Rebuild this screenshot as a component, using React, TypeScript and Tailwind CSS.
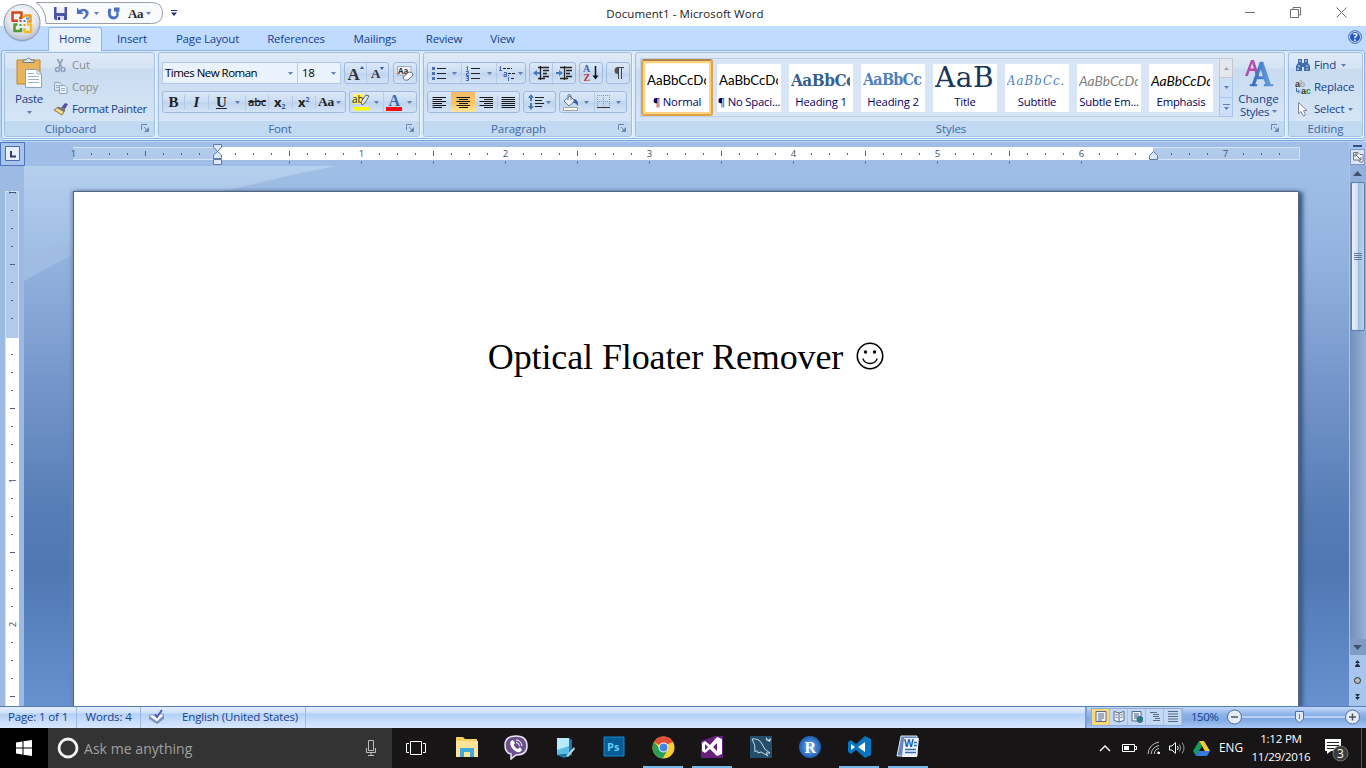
import type { ReactNode } from "react";

type IconProps = { w: number; h: number; className?: string; children: ReactNode };

function Icon({ w, h, className = "", children }: IconProps) {
  return (
    <svg width={w} height={h} viewBox={`0 0 ${w} ${h}`} className={`shrink-0 ${className}`} fill="none">
      {children}
    </svg>
  );
}

function Caret({ className = "" }: { className?: string }) {
  return (
    <Icon w={5} h={3} className={className}>
      <path d="M0 0H5L2.5 3Z" fill="#5d7fb5" />
    </Icon>
  );
}

function Launcher() {
  return (
    <Icon w={8} h={8}>
      <path d="M0.5 6V0.5H6" stroke="#6c86ae" />
      <path d="M3 3L6 6M7.5 3.5V7.5H3.5" stroke="#6c86ae" />
      <path d="M7 4V7H4Z" fill="#6c86ae" />
    </Icon>
  );
}

function OfficeButton() {
  return (
    <svg width="42" height="42" viewBox="0 0 42 42" className="absolute left-[1px] top-[2px] z-20" fill="none">
      <defs>
        <radialGradient id="orb" cx="0.5" cy="0.35" r="0.65">
          <stop offset="0" stopColor="#ffffff" />
          <stop offset="0.6" stopColor="#e6e8ec" />
          <stop offset="1" stopColor="#b4bfd0" />
        </radialGradient>
      </defs>
      <circle cx="21" cy="21.5" r="18.5" fill="#9fb4d3" opacity="0.6" />
      <circle cx="21" cy="20.5" r="18" fill="url(#orb)" stroke="#8d9db8" />
      <path d="M17 18.800H11.500V10.500H20.500V16H18" stroke="#d5451b" strokeWidth="2.500" strokeLinejoin="round" />
      <path d="M23.500 13.500H29.500V19.500H26M22.500 16V13.500" stroke="#f09a1c" strokeWidth="2.400" strokeLinejoin="round" />
      <path d="M16.500 22.500H13.500V29H20V26" stroke="#4d9a2f" strokeWidth="2.500" strokeLinejoin="round" />
      <path d="M26 22.500H30V30H23.500V26" stroke="#f6bd21" strokeWidth="2.500" strokeLinejoin="round" />
      <path d="M18.500 18h2v2h-2z" fill="#c8401b" />
      <path d="M22.500 18h2v2h-2z" fill="#3977c9" />
      <path d="M18.500 22h2v2h-2z" fill="#4d9a2f" />
      <path d="M22.500 22h2v2h-2z" fill="#e39d1c" />
      <path d="M25 15.500h3v2h-3z" fill="#4f93d8" />
    </svg>
  );
}

function TitleBar() {
  return (
    <header className="relative flex h-[26px] shrink-0 bg-white">
      <svg width="180" height="26" viewBox="0 0 180 26" className="absolute left-0 top-0" fill="none">
        <path d="M36 2.500H151.500Q162.500 2.500 162.500 13Q162.500 23.500 151.500 23.500H46Q46 9 36 2.500Z" fill="#f8fafc" stroke="#9a9da3" />
      </svg>
      <div className="relative flex h-[26px] w-[200px] items-center pl-[53px]">
        <Icon w={15} h={15}>
          <path d="M1 1H14V14H2.500L1 12.500Z" fill="#4a55a8" />
          <path d="M3.500 1H11.500V7H3.500Z" fill="#eef1fb" />
          <path d="M4 10H11V14H4Z" fill="#d3daf0" />
          <path d="M5 11H7V14H5Z" fill="#30397f" />
        </Icon>
        <Icon w={13} h={13} className="ml-[8px]">
          <path d="M1 0.500V7H7.500L5.500 5Q8.500 3.500 9.500 5.500Q10.500 8 7 11L8 12.500Q13.500 9 12.500 4.500Q9.500 0 3.500 3Z" fill="#4a71c5" />
        </Icon>
        <Caret className="ml-[5px]" />
        <Icon w={13} h={13} className="ml-[8px]">
          <path d="M7 0.500H12.500V5L11 4.500Q13 9 9.500 11.500Q5.500 14 2 10.500Q0 7 1.500 1.500L4.500 2Q3 7 4.500 8.500Q7 10.500 9 8.500Q10 6.500 8.500 4L7 5Z" fill="#4a71c5" />
        </Icon>
        <span className="ml-[8px] w-[16px] font-['Liberation_Serif',serif] text-[13px] font-bold leading-none tracking-[-0.300px] text-[#2c2c2c]">Aa</span>
        <Caret className="ml-[2px]" />
        <Icon w={6} h={6} className="ml-[20px]">
          <path d="M0 0.500H6" stroke="#17366e" />
          <path d="M0 2.500H6L3 6Z" fill="#17366e" />
        </Icon>
      </div>
      <div className="flex flex-1 justify-center pr-[196px] pt-[7px] text-[11.500px] leading-[14px] tracking-[0.080px] text-[#1b1b1b]">
        <span className="whitespace-nowrap">Document1 - Microsoft Word</span>
      </div>
      <div className="absolute right-[19px] top-[7px] flex items-center gap-[35px]">
        <Icon w={10} h={11}><path d="M0 5.500H10" stroke="#707070" /></Icon>
        <Icon w={11} h={11}><path d="M3 2.500V0.500H10.500V8H8.500M0.500 2.500H8.500V10.500H0.500Z" stroke="#707070" /></Icon>
        <Icon w={11} h={11}><path d="M0.500 0.500L10.500 10.500M10.500 0.500L0.500 10.500" stroke="#707070" /></Icon>
      </div>
    </header>
  );
}

function Tabs() {
  return (
    <nav className="relative z-10 flex h-[24px] shrink-0 bg-[#bfdbff] pl-[48px] text-[11.500px] leading-[14px] tracking-[-0.180px] text-[#15428b]">
      <div className="mt-[1px] h-[24px] w-[54px] rounded-t-[3px] border border-b-0 border-[#8fb5e6] bg-[#e9f1fc] pt-[4px] text-center">Home</div>
      <span className="w-[60px] pt-[6px] text-center">Insert</span>
      <span className="w-[91px] pt-[6px] text-center">Page Layout</span>
      <span className="w-[86px] pt-[6px] text-center">References</span>
      <span className="w-[72px] pt-[6px] text-center">Mailings</span>
      <span className="w-[66px] pt-[6px] text-center">Review</span>
      <span className="w-[51px] pt-[6px] text-center">View</span>
      <span className="ml-auto mr-[4px] mt-[4px] flex h-[14px] w-[14px] items-center justify-center rounded-full border border-[#6282bd] bg-[#2457c5] text-[10px] font-bold leading-none text-white ring-1 ring-inset ring-[#d7e6fc]">?</span>
    </nav>
  );
}

function Group({ label, width, launcher, children }: { label: string; width: string; launcher?: boolean; children: ReactNode }) {
  return (
    <section className={`flex h-[85px] shrink-0 flex-col overflow-hidden rounded-[3px] border border-[#a3bfe0] bg-[linear-gradient(180deg,#dfeaf7_0%,#d5e3f3_18%,#c9dbf0_20%,#d9e8f8_100%)] shadow-[1px_1px_0_#eef6ff] ${width}`}>
      <div className="h-[68px] shrink-0">{children}</div>
      <footer className="flex h-[15px] items-center bg-[#c1d9f1] text-[11.500px] leading-[14px] tracking-[-0.100px] text-[#4069a5]">
        <span className={`flex-1 text-center ${launcher ? "pr-[5px]" : ""}`}>{label}</span>
        {launcher && <span className="mb-[2px] mr-[5px]"><Launcher /></span>}
      </footer>
    </section>
  );
}

function Clipboard() {
  return (
    <Group label="Clipboard" width="w-[151px]" launcher>
      <div className="flex h-full text-[11.500px] leading-[14px]">
        <div className="flex w-[48px] flex-col items-center pt-[4px] text-[#15428b]">
          <Icon w={28} h={31}>
            <path d="M2 3H25V27H2Z" fill="#e7b45a" stroke="#bf8633" />
            <path d="M8 5.500V3H11Q13.500 -1 16 3H19V5.500Z" fill="#dfe4e9" stroke="#6d7a86" />
            <path d="M10.500 12.500H22L26.500 17V30.500H10.500Z" fill="white" stroke="#8aa0c4" />
            <path d="M22 12.500V17H26.500M13 16.500H19M13 19.500H24M13 22.500H24M13 25.500H24" stroke="#9caecb" />
          </Icon>
          <span className="mt-[4px] tracking-[-0.300px]">Paste</span>
          <Caret className="mt-[5px]" />
        </div>
        <div className="flex flex-col pt-[1px]">
          <span className="flex h-[22px] shrink-0 items-center tracking-[-0.200px] text-[#8d8d8d]">
            <Icon w={15} h={15} className="mr-[4px]"><path d="M4.500 1L8.500 9M9.500 1L6 9" stroke="#8fa0b9" strokeWidth="1.700" /><circle cx="4.500" cy="11.500" r="2" stroke="#8fa0b9" strokeWidth="1.500" /><circle cx="10" cy="11.500" r="2" stroke="#8fa0b9" strokeWidth="1.500" /></Icon>
            Cut
          </span>
          <span className="flex h-[22px] shrink-0 items-center tracking-[-0.200px] text-[#8d8d8d]">
            <Icon w={15} h={13} className="mr-[4px]"><path d="M1.500 1.500H7L9 3.500V9.500H1.500Z" fill="#dce4ef" stroke="#8fa4c3" /><path d="M6.500 4.500H12L14 6.500V12.500H6.500Z" fill="#edf2f8" stroke="#8fa4c3" /><path d="M8 7.500h4M8 9.500h4M3 4.500h3M3 6.500h3" stroke="#9aafca" /></Icon>
            Copy
          </span>
          <span className="flex h-[22px] shrink-0 items-center whitespace-nowrap tracking-[-0.380px] text-[#15428b]">
            <Icon w={16} h={14} className="mr-[3px]"><path d="M8 6L12 1L15 2L12 7Z" fill="#574fa4" /><path d="M5 5L12 8L9 13L1 8Z" fill="#f1dc8d" stroke="#8c7740" /><path d="M5 5L12 8L11 10L4 6Z" fill="#64727f" /></Icon>
            Format Painter
          </span>
        </div>
      </div>
    </Group>
  );
}

const box = "flex h-[22px] items-center rounded-[3px] border border-[#9ebae1] bg-[linear-gradient(180deg,#dbe8f8,#cbdcf2_48%,#bfd4ee_52%,#d2e3f7)]";
const divider = "border-r border-[#b3cbe9]";

function FontGroup() {
  return (
    <Group label="Font" width="w-[262px]" launcher>
      <div className="flex gap-[4px] pl-[3px] pt-[9px]">
        <div className="flex h-[22px] text-[11.500px] leading-[20px] text-black">
          <div className="flex w-[136px] items-center border border-[#b3c9e8] bg-[#eaf2fb] pl-[2px]"><span className="w-[123px] tracking-[-0.520px]">Times New Roman</span><Caret /></div>
          <div className="flex w-[43px] items-center border border-l-0 border-[#b3c9e8] bg-[#eaf2fb] pl-[4px]"><span className="w-[29px] tracking-[-0.400px]">18</span><Caret /></div>
        </div>
        <div className={`${box} -ml-px w-[45px] font-['Liberation_Serif',serif] font-bold text-[#333]`}>
          <span className={`flex h-full w-[23px] justify-center pt-[3px] text-[17px] leading-none ${divider}`}>A<Icon w={4} h={3}><path d="M2 0L4 3H0Z" fill="#345ba0" /></Icon></span>
          <span className="flex h-full w-[21px] justify-center pt-[1px] text-[13px] leading-[19px]">A<Icon w={4} h={3} className="mt-[3px]"><path d="M0 0H4L2 3Z" fill="#345ba0" /></Icon></span>
        </div>
        <div className={`${box} w-[24px] justify-center`}>
          <Icon w={17} h={17}><path d="M0.500 1.500H14V10H0.500Z" fill="#f3f5fa" stroke="#a0aac0" /><text x="1" y="9" fontSize="8" fontWeight="bold" fill="#333">Aa</text><path d="M6 12L12 7Q16 7 16 10L11 15Q6 16 6 12Z" fill="#fbfbfd" stroke="#69758e" /></Icon>
        </div>
      </div>
      <div className="flex gap-[3px] pl-[3px] pt-[7px]">
        <div className={`${box} w-[184px] font-['Liberation_Serif',serif] text-[15px] font-bold leading-none text-[#222]`}>
          <span className={`w-[22px] shrink-0 text-center ${divider}`}>B</span>
          <span className={`w-[24px] shrink-0 text-center italic ${divider}`}>I</span>
          <span className={`flex w-[37px] shrink-0 items-center gap-[8px] pl-[7px] ${divider}`}><span className="underline">U</span><Caret /></span>
          <span className={`w-[23px] shrink-0 text-center text-[11px] leading-[14px] line-through font-['Open_Sans',sans-serif] font-semibold tracking-[-0.300px] ${divider}`}>abc</span>
          <span className={`flex w-[24px] shrink-0 items-end pl-[5px] font-['Open_Sans',sans-serif] text-[13px] ${divider}`}>x<span className="text-[7px] leading-[5px] text-[#315ca8]">2</span></span>
          <span className={`flex w-[23px] shrink-0 items-start pl-[5px] font-['Open_Sans',sans-serif] text-[13px] ${divider}`}>x<span className="text-[7px] leading-[7px] text-[#315ca8]">2</span></span>
          <span className="flex shrink-0 items-center pl-[2px] text-[13.500px] tracking-[-0.300px]">Aa<Caret className="ml-[2px]" /></span>
        </div>
        <div className={`${box} w-[68px]`}>
          <span className={`flex h-full w-[34px] items-center pl-[2px] ${divider}`}>
            <Icon w={18} h={18}><path d="M1 1H11V11H1Z" fill="#fff65c" /><text x="0" y="10" fontSize="10" fill="#222">ab</text><path d="M9 9L14 2L17 3L13 10L10 12Z" fill="#e5e9ee" stroke="#5c6470" /><path d="M1 14H17V17.500H1Z" fill="#fffb00" /></Icon>
            <Caret className="ml-[4px]" />
          </span>
          <span className="flex h-full items-center pl-[2px]">
            <Icon w={16} h={18}><text x="2.500" y="12.500" fontFamily="Liberation Serif" fontSize="16" fontWeight="bold" fill="#3d66ac">A</text><path d="M0 14H16V18H0Z" fill="#f20c16" /></Icon>
            <Caret className="ml-[5px]" />
          </span>
        </div>
      </div>
    </Group>
  );
}

function Lines({ d }: { d: string }) {
  return <Icon w={15} h={13}><path d={d} stroke="#151515" /></Icon>;
}

function ParagraphGroup() {
  return (
    <Group label="Paragraph" width="w-[209px]" launcher>
      <div className="flex gap-[3px] pl-[3px] pt-[9px]">
        <div className={`${box} w-[99px]`}>
          <span className={`flex h-full w-[34px] items-center gap-[6px] pl-[4px] ${divider}`}>
            <Icon w={14} h={13}><path d="M0 0h3v3H0zM0 5h3v3H0zM0 10h3v3H0z" fill="#4b72b5" /><path d="M5 1.500H14M5 6.500H14M5 11.500H14" stroke="#222" /></Icon><Caret />
          </span>
          <span className={`flex h-full w-[35px] items-center gap-[7px] pl-[4px] ${divider}`}>
            <Icon w={14} h={15}><path d="M0.500 1.500L1.500 .500V4.500M0 5.500H2.500V7.500H.500V9.500H3M0 10.500H2.500V14.500H0M.500 12.500H2.500" stroke="#3f62b4" /><path d="M5 2.500H14M5 7.500H14M5 12.500H14" stroke="#222" /></Icon><Caret />
          </span>
          <span className="flex h-full items-center gap-px pl-[2px]">
            <Icon w={18} h={15}><path d="M0.500 1.500L1.500 .500V4M0 4.500H3M5 6.500H7.500V10.500H5V8.500H7.500M9.500 11V15M9.500 9V10" stroke="#3f62b4" /><path d="M4 2.500H13M9 7.500H16M12 12.500H16" stroke="#222" strokeDasharray="3 1" /></Icon><Caret />
          </span>
        </div>
        <div className={`${box} w-[47px]`}>
          <span className={`flex h-full w-[23px] items-center justify-center ${divider}`}><Icon w={17} h={14}><path d="M5 1.500H16M5 12.500H12M10 4.500H16M10 7.500H14M10 10.500H16M7.500 0V14" stroke="#222" strokeWidth="1.300" /><path d="M0 7L4 4V6H7V8H4V10Z" fill="#4879bd" /></Icon></span>
          <span className="flex h-full w-[22px] items-center justify-center"><Icon w={17} h={14}><path d="M4 1.500H16M4 12.500H12M10 4.500H16M10 7.500H14M10 10.500H16M8.500 0V14" stroke="#222" strokeWidth="1.300" /><path d="M7 7L3 4V6H0V8H3V10Z" fill="#4879bd" /></Icon></span>
        </div>
        <div className={`${box} w-[24px] justify-center`}>
          <Icon w={16} h={18}><g fontFamily="Liberation Serif" fontSize="10" fontWeight="bold"><text x="0" y="8" fill="#3566ae">A</text><text x="0.500" y="16.500" fill="#c52f35">Z</text></g><path d="M12.500 2V13" stroke="#111" strokeWidth="1.500" /><path d="M9.500 11.500H15.500L12.500 15.500Z" fill="#111" /></Icon>
        </div>
        <div className={`${box} w-[24px] justify-center`}>
          <Icon w={11} h={14}><path d="M6 1H5A3.500 3.500 0 0 0 5 8H6Z" fill="#555" /><path d="M4 1.500H11M5.500 1V13M8.500 1V13" stroke="#444" /></Icon>
        </div>
      </div>
      <div className="flex gap-[3px] pl-[3px] pt-[7px]">
        <div className={`${box} w-[93px]`}>
          <span className="flex w-[23px] justify-center"><Lines d="M0.500 1.500H14M.500 3.500H10M.500 5.500H14M.500 7.500H10M.500 9.500H14M.500 11.500H10" /></span>
          <span className="flex h-full w-[24px] items-center justify-center bg-[linear-gradient(180deg,#f7b966,#f9c568_48%,#f9c158_52%,#ffe69d)]"><Lines d="M0.500 1.500H14M3 3.500H12M.500 5.500H14M3 7.500H12M.500 9.500H14M3 11.500H12" /></span>
          <span className={`flex w-[23px] justify-center ${divider}`}><Lines d="M0.500 1.500H14M5 3.500H14M.500 5.500H14M5 7.500H14M.500 9.500H14M5 11.500H14" /></span>
          <span className="flex w-[21px] justify-center"><Lines d="M0.500 1.500H14M.500 3.500H14M.500 5.500H14M.500 7.500H14M.500 9.500H14M.500 11.500H14" /></span>
        </div>
        <div className={`${box} w-[33px] justify-center gap-[2px]`}>
          <Icon w={16} h={16}><path d="M7 3.500H16M7 6.500H14M7 9.500H16M7 12.500H14" stroke="#222" /><path d="M3 0L6 4H4V7H2V4H0ZM2 9H4V12H6L3 16L0 12H2Z" fill="#487ab7" /></Icon><Caret />
        </div>
        <div className={`${box} w-[68px]`}>
          <span className={`flex h-full w-[35px] items-center gap-[4px] pl-[2px] ${divider}`}>
            <Icon w={18} h={17}><path d="M2 7L8 2L13 7L7 12Z" fill="#eef2f9" stroke="#627390" /><path d="M6 6V1Q8 -1 9 2V6" stroke="#627390" /><path d="M12 5Q17 6 16 12Q13 8 11 9Z" fill="#3666a8" /><path d="M1.500 13.500H15.500V16.500H1.500Z" fill="#fffaf2" stroke="#a3a3a3" /></Icon><Caret />
          </span>
          <span className="flex h-full items-center gap-[5px] pl-[2px]"><Icon w={14} h={14}><path d="M0.500 0V13M6.500 0V13M12.500 0V13M0 .500H13M0 6.500H13" stroke="#8497b4" strokeDasharray="1 1" /><path d="M0 12.500H13" stroke="#333" /></Icon><Caret /></span>
        </div>
      </div>
    </Group>
  );
}

const styleItems = [
  { label: "¶ Normal", sample: "AaBbCcDc", css: "font-[Lato] text-[13.300px] text-black pt-[10px]", active: true },
  { label: "¶ No Spaci...", sample: "AaBbCcDc", css: "font-[Lato] text-[13.300px] text-black pt-[10px]" },
  { label: "Heading 1", sample: "AaBbCc", css: "font-['DejaVu_Serif_Condensed','DejaVu_Serif'] text-[17px] font-bold text-[#365f91] pt-[8px] tracking-[-0.500px]" },
  { label: "Heading 2", sample: "AaBbCc", css: "font-['DejaVu_Serif_Condensed','DejaVu_Serif'] text-[16px] font-bold text-[#4f81bd] pt-[8px] tracking-[-0.800px]" },
  { label: "Title", sample: "AaB", css: "font-['DejaVu_Serif'] text-[28px] text-[#17365d] pt-0 tracking-[0.600px]" },
  { label: "Subtitle", sample: "AaBbCc.", css: "font-['DejaVu_Serif_Condensed','DejaVu_Serif'] text-[13px] italic text-[#4f81bd] pt-[10px] tracking-[1.100px]" },
  { label: "Subtle Em...", sample: "AaBbCcDc", css: "font-[Lato] text-[13.800px] italic text-[#808080] pt-[10px]" },
  { label: "Emphasis", sample: "AaBbCcDc", css: "font-[Lato] text-[13.800px] italic text-black pt-[10px]" },
];

function Styles() {
  return (
    <Group label="Styles" width="w-[650px]" launcher>
      <div className="flex pl-[4px] pt-[5px]">
        <div className="flex h-[59px] w-[579px] items-center border border-r-0 border-[#bbd0eb] bg-[#d7e5f7]">
          {styleItems.map((item) => (
            <div key={item.label} className={`flex h-[57px] w-[72px] shrink-0 items-center justify-center ${item.active ? "rounded-[3px] border-2 border-[#e3a344] border-t-[#b78348] bg-[#fff3d6] shadow-[inset_0_0_0_2px_#fbd384]" : ""}`}>
              <div className="flex h-[48px] w-[64px] flex-col overflow-hidden bg-white">
                <div className={`ml-[2px] h-[31px] w-[59px] shrink-0 overflow-hidden whitespace-nowrap leading-none ${item.css}`}>{item.sample}</div>
                <span className="h-[16px] whitespace-nowrap text-center text-[11.300px] leading-[14px] tracking-[-0.200px] text-[#000063]">{item.label}</span>
              </div>
            </div>
          ))}
        </div>
        <div className="flex w-[14px] flex-col">
          <span className="flex h-[20px] items-center justify-center border border-[#c6c8cc] bg-[#e4e7eb]"><Icon w={5} h={3}><path d="M0 3H5L2.500 0Z" fill="#9aa4b4" /></Icon></span>
          <span className="flex h-[20px] items-center justify-center border border-t-0 border-[#aac5eb] bg-[#cddff6]"><Caret /></span>
          <span className="flex h-[19px] flex-col items-center justify-center gap-[2px] border border-t-0 border-[#aac5eb] bg-[#cddff6]"><i className="h-px w-[7px] bg-[#5d7fb5]" /><Caret /></span>
        </div>
        <div className="flex w-[51px] flex-col items-center text-[11.500px] leading-[13px] text-[#15428b]">
          <Icon w={30} h={30}>
            <defs><linearGradient id="blueA" x1="0" y1="0" x2="1" y2="0"><stop stopColor="#2c64b8" /><stop offset="1" stopColor="#6ba9ed" /></linearGradient></defs>
            <path d="M1 18L7 2H10L15 18H12L10.500 13H5.500L4 18ZM6.500 10.500H9.800L8.200 5Z" fill="#b64cae" />
            <path d="M6 28V26.500H8L16 4H19L26.500 26.500H29V28H20V26.500H22L20 21H13L11 26.500H13V28ZM14 18.500H19.200L16.800 10.500Z" fill="url(#blueA)" stroke="#4070b4" strokeWidth=".4" />
          </Icon>
          <span className="mt-[4px]">Change</span>
          <span className="flex items-center gap-[3px] tracking-[-0.300px]">Styles<Caret /></span>
        </div>
      </div>
    </Group>
  );
}

function Editing() {
  return (
    <Group label="Editing" width="w-[75px]">
      <div className="flex flex-col pl-[6px] pt-[1px] text-[11.500px] leading-[14px] tracking-[-0.250px] text-[#15428b]">
        <span className="flex h-[22px] items-center"><Icon w={16} h={14} className="mr-[3px]"><path d="M3 1h4v4h2V1h4v4l2 3v5H9V9H7v4H1V8l2-3z" fill="#406cac" /><path d="M4 3h2M10 3h2M3 8h2M11 8h2M3 10v2M12 10v2" stroke="#dce9fa" /></Icon>Find<Caret className="ml-[5px]" /></span>
        <span className="flex h-[22px] items-center"><Icon w={16} h={16} className="mr-[3px]"><g fontFamily="Liberation Sans" fontSize="9" fontWeight="bold"><text x="0" y="8" fill="#333">a<tspan fill="#aaa">b</tspan></text><text x="6" y="15" fill="#333">a<tspan fill="#169345">c</tspan></text></g><path d="M1.500 9V12.500H4M3 10.500L5 12.500L3 14.500" stroke="#3970ba" /></Icon>Replace</span>
        <span className="flex h-[22px] items-center"><Icon w={16} h={16} className="mr-[3px]"><path d="M3.500 1.500V13L6 10.500L8.500 15L10.500 14L8.500 9.500H12Z" fill="white" stroke="#7a8799" /></Icon>Select<Caret className="ml-[4px]" /></span>
      </div>
    </Group>
  );
}

function Ribbon() {
  return (
    <div className="flex h-[92px] shrink-0 bg-[#bfdbff] px-[1px] pb-[3px]">
      <div className="flex flex-1 gap-[3px] rounded-[3px] border border-[#8db2e3] bg-[#d8ebfa] pl-[2px] pt-[1px] shadow-[0_1px_0_#d9ffff,0_2px_1px_#7b9dc9]">
        <Clipboard />
        <FontGroup />
        <ParagraphGroup />
        <Styles />
        <Editing />
      </div>
    </div>
  );
}

function HorizontalRuler() {
  const ticks = [];
  for (let i = -7; i <= 59; i++) {
    if (i === 0) continue;
    const x = 217.5 + i * 18;
    if (i % 8 === 0) {
      ticks.push(<text key={i} x={x} y="15" textAnchor="middle" fontSize="9.500" fill="#41536e">{i / 8}</text>);
    } else {
      const major = i % 4 === 0;
      ticks.push(<path key={i} d={major ? `M${x} 9V14` : `M${x} 11V13`} stroke="#50617b" />);
    }
    if (i > 0 && i < 52 && i % 4 === 0) ticks.push(<path key={`tab${i}`} d={`M${x} 19V22`} stroke="#5b79a3" />);
  }
  return (
    <svg width="1349" height="24" viewBox="0 0 1349 24" className="block shrink-0" fill="none">
      <path d="M.500 .500H24.500V23.500H.500Z" fill="#a7c4ea" stroke="#4c73bd" />
      <path d="M5.500 4.500H19.500V18.500H5.500Z" fill="#e6effb" stroke="#506aa6" />
      <path d="M11 9V14.500H16" stroke="#2d3f61" strokeWidth="2" />
      <path d="M73 5.500H1299.500V17.500H73" fill="#b1caec" stroke="#d4e4f8" />
      <path d="M218 5H1153V18H218Z" fill="white" />
      <text x="73.500" y="15" textAnchor="middle" fontSize="9.500" fill="#41536e">1</text>
      {ticks}
      <path d="M213.500 2.500H221.500V5L217.500 9.500L213.500 5ZM217.500 9.500L221.500 13V16.500H213.500V13ZM213.500 17.500H221.500V22.500H213.500Z" fill="#dde9f9" stroke="#5f7ba9" />
      <path d="M1153.500 9.500L1157.500 13.500V17.500H1149.500V13.500Z" fill="#dde9f9" stroke="#5f7ba9" />
    </svg>
  );
}

function VerticalRuler() {
  const ticks = [];
  for (let i = -7; i <= 20; i++) {
    if (i === 0) continue;
    const y = 170.5 + i * 18;
    if (i % 8 === 0) ticks.push(<text key={i} transform={`translate(16 ${y}) rotate(-90)`} textAnchor="middle" fontSize="9.500" fill="#41536e">{i / 8}</text>);
    else ticks.push(<path key={i} d={i % 4 === 0 ? `M10 ${y}H15` : `M11 ${y}H13`} stroke="#50617b" />);
  }
  return (
    <svg width="24" height="540" viewBox="0 0 24 540" className="shrink-0 bg-[#9cbae3]" fill="none">
      <path d="M5.500 25.500H18.500V540H5.500Z" fill="#b1caec" stroke="#d4e4f8" />
      <path d="M6 172H19V540H6Z" fill="white" />
      <path d="M9.500 26.500H15.500M9.500 27.500V25.500M15.500 27.500V26" stroke="#41536e" />
      {ticks}
    </svg>
  );
}

function Smiley() {
  return (
    <Icon w={28} h={28} className="ml-[13px] mt-[21px]">
      <circle cx="14" cy="14" r="12.700" stroke="black" strokeWidth="1.600" />
      <circle cx="9.500" cy="10" r="1.700" fill="black" />
      <circle cx="18.500" cy="10" r="1.700" fill="black" />
      <path d="M6.800 16.500Q8.500 21.500 14 21.500Q19.500 21.500 21.200 16.500" stroke="black" strokeWidth="1.300" />
    </Icon>
  );
}

function DocumentCanvas() {
  return (
    <main className="relative flex-1 overflow-hidden bg-[linear-gradient(180deg,#a0bfe7_0%,#93b3df_17%,#7596ca_40%,#557cb5_65%,#4f78b3_75%,#6791cf_100%)]">
      <svg width="360" height="140" viewBox="0 0 360 140" className="absolute left-0 top-0">
        <defs><linearGradient id="glow" x1="0" y1="0" x2="0" y2="1"><stop stopColor="#b5cfee" /><stop offset="1" stopColor="#9ebbe3" /></linearGradient></defs>
        <path d="M0 0H311Q125 42 0 115Z" fill="#a0bce3" />
        <path d="M0 0H311Q125 37 0 94Z" fill="url(#glow)" />
      </svg>
      <article className="relative ml-[49px] mt-[25px] flex h-[515px] w-[1226px] justify-center border-l border-r border-t border-[#53657f] bg-white pt-[129px] shadow-[4px_1px_4px_#3d5b87,-1px_0_4px_#6d86ad]">
        <h1 className="mt-[15px] whitespace-nowrap font-['Liberation_Serif',serif] text-[36px] font-normal leading-[42px] tracking-[-0.110px] text-black">Optical Floater Remover</h1>
        <Smiley />
      </article>
    </main>
  );
}

function ScrollBar() {
  return (
    <aside className="flex w-[17px] shrink-0 flex-col items-center bg-[#a8c5ed]">
      <i className="mt-[3px] h-[2px] w-[9px] shrink-0 bg-[#344f80]" />
      <span className="mt-[2px] flex h-[16px] w-[15px] shrink-0 items-center justify-center border border-[#7e9acb] bg-[#dce5f3]">
        <Icon w={12} h={12}><path d="M1.500 1.500H6L8 3.500H11V11H8L6 9H1.500Z" fill="white" stroke="#6b7890" /><path d="M3 3L9 9M9 6V9H6M3 6V3H6" stroke="#566681" /></Icon>
      </span>
      <span className="flex h-[17px] w-[16px] shrink-0 items-center justify-center bg-[#92b0dc]"><Icon w={9} h={5}><path d="M0 5H9L4.500 0Z" fill="#40516f" /></Icon></span>
      <div className="flex w-[16px] flex-1 flex-col bg-[linear-gradient(90deg,#738eb8,#97b2d9)]">
        <div className="mx-px flex h-[149px] items-center justify-center rounded-[2px] border border-[#587ead] bg-[linear-gradient(90deg,#e8f0fb,#d1dff1_45%,#a2bbdc_50%,#bdd3ed)]">
          <Icon w={8} h={7}><path d="M0 .500H8M0 2.500H8M0 4.500H8M0 6.500H8" stroke="#63799e" /></Icon>
        </div>
      </div>
      <span className="flex h-[16px] w-[16px] items-center justify-center bg-[#809bc4]"><Icon w={9} h={5}><path d="M0 0H9L4.500 5Z" fill="#40516f" /></Icon></span>
      <span className="flex h-[51px] flex-col items-center justify-between pb-[6px] pt-[5px]">
        <Icon w={7} h={7}><path d="M3.500 0L6 3H1ZM3.500 3L6 6H1Z" fill="#202d42" /><path d="M1 6.500H6" stroke="#202d42" /></Icon>
        <Icon w={7} h={7}><circle cx="3.500" cy="3.500" r="3" fill="#bcbcb5" stroke="#333" /></Icon>
        <Icon w={7} h={7}><path d="M1 1H6L3.500 4ZM1 4H6L3.500 7Z" fill="#202d42" /></Icon>
      </span>
    </aside>
  );
}

const viewIcons = [
  "M1 1.500H11V11.500H1ZM3 4H9M3 6H9M3 8H9M3 10H7",
  "M6 3V12M1 1.500L6 3L11 1.500V10.500L6 12L1 10.500ZM2.500 4.500L4.500 5M7.500 5L9.500 4.500M2.500 7L4.500 7.500M7.500 7.500L9.500 7",
  "M1 1.500H10V8M7 11H1V1.500M3 4H8M3 6H8M3 8H6",
  "M1 2.500H8M4 4.500H10M4 6.500H10M6 8.500H11M4 10.500H11",
  "M1 1.500H11M1 4H11M1 6.500H11M1 9H11M1 11.500H11",
];

function StatusBar() {
  return (
    <footer className="flex h-[22px] shrink-0 items-center border-t border-[#567db1] bg-[linear-gradient(180deg,#e4efff_0%,#cfe1fc_28%,#b1d0f8_33%,#c7dcfc_65%,#d9e7ff_100%)] text-[11.500px] leading-none tracking-[-0.150px] text-[#15428b]">
      <span className="flex h-full w-[77px] items-center justify-center border-r border-[#9ebae3] pb-[2px]">Page: 1 of 1</span>
      <span className="flex h-full w-[64px] items-center justify-center border-r border-[#9ebae3] pb-[2px]">Words: 4</span>
      <Icon w={18} h={16} className="mb-[2px] ml-[7px]"><path d="M1 7L9 11L16 6V10L9 15L1 10Z" fill="#8193bc" /><path d="M1 7Q4 4 8 8Q11 3 16 6L9 13Z" fill="#f7faff" stroke="#7d91ba" /><path d="M7 5L9 8L14 1" stroke="#5262b2" strokeWidth="2" /></Icon>
      <span className="ml-[8px] flex h-full w-[132px] items-center border-r border-[#9ebae3] pb-[2px] pl-[8px]">English (United States)</span>
      <div className="ml-auto flex h-full w-[281px] items-center border-l-2 border-[#7ba0d8] bg-[linear-gradient(180deg,#c3d9fb,#8eb3e9_35%,#80a9e5_60%,#a8c7f5)] pb-[2px] pl-[4px]">
        <div className="flex h-[18px] w-[92px] items-center border border-[#8fadd6] bg-[#c4d9f5]">
          {viewIcons.map((d, i) => (
            <span key={i} className={`flex h-full w-[18px] items-center justify-center border-r border-[#a6c0e6] ${i === 0 ? "bg-[#fad779]" : ""}`}><Icon w={12} h={13}><path d={d} fill={i < 3 ? "#edf3fb" : "none"} stroke="#596a83" />{i === 2 && <circle cx="9" cy="9.500" r="3" fill="#24856d" stroke="#3968a3" />}</Icon></span>
          ))}
        </div>
        <span className="ml-[8px] w-[27px] tracking-[-0.500px]">150%</span>
        <Icon w={144} h={20} className="ml-[6px]">
          <path d="M18 10H129" stroke="#e8f3ff" />
          <g fill="#e6ecf6" stroke="#536f9e"><circle cx="10.500" cy="10" r="7" /><circle cx="128.500" cy="10" r="7" /></g>
          <path d="M7 10H14M125 10H132M128.500 6.500V13.500" stroke="#4b5364" strokeWidth="1.500" />
          <path d="M71.500 4.500H79.500V12L75.500 16L71.500 12Z" fill="#dce8f8" stroke="#4e719f" /><path d="M75.500 7V12" stroke="#6881a7" />
        </Icon>
      </div>
    </footer>
  );
}

function AppIcon({ name }: { name: string }) {
  switch (name) {
    case "files": return <Icon w={24} h={24}><path d="M1 2H8L10 4H22V21H1Z" fill="#f3cf64" /><path d="M1 6H23V22H1Z" fill="#fce59a" /><path d="M5 13H19V22H15V17H9V22H5Z" fill="#42a9d8" /></Icon>;
    case "viber": return <Icon w={24} h={25}><path d="M12 1Q23 1 23 11Q23 20 12 20L7 24V19Q1 18 1 10Q1 1 12 1Z" fill="#6d518e" stroke="#eee9f6" strokeWidth="1.500" /><path d="M7 6L9 5L11 8L9.500 10Q11 13 14 14L16 12L18 15L16 17Q12 18 8 13Q5 9 7 6Z" fill="white" /><path d="M12 5Q17 5 18 11M12 7.500Q15 7.500 15.500 11" stroke="white" /></Icon>;
    case "notes": return <Icon w={22} h={23}><path d="M3 2H15V18L3 19Z" fill="#58bce5" /><path d="M3 2H15V10L3 14Z" fill="#b7ebff" /><path d="M15 2L18 4V19L10 22L3 19L15 18Z" fill="#187baf" /><path d="M12 20L20 11L21 13L14 21Z" fill="#bcd1d5" /></Icon>;
    case "ps": return <Icon w={22} h={22}><path d="M1 1H21V20H1Z" fill="#075b97" stroke="#168bd0" /><text x="4" y="15" fontSize="11" fontWeight="bold" fill="#65cdf5">Ps</text></Icon>;
    case "chrome": return <Icon w={23} h={23}><circle cx="11.500" cy="11.500" r="11" fill="#f7cf35" /><path d="M11.500 11.500L2 6A11 11 0 0 1 21 6L16 8Z" fill="#e44b38" /><path d="M2 6A11 11 0 0 0 10.500 22.500L15 15L10 15Z" fill="#2c9c58" /><circle cx="11.500" cy="11.500" r="5" fill="white" /><circle cx="11.500" cy="11.500" r="4" fill="#4285e8" /></Icon>;
    case "vs": return <Icon w={24} h={24}><path d="M1 6L15 1L23 1V23H1Z" fill="#67207b" /><path d="M2 8L5 6L10 10L17 2L22 4V19L17 21L10 14L5 18L2 16ZM5 9V15L8 12ZM17 8L13 12L17 16Z" fill="white" fillRule="evenodd" /></Icon>;
    case "mysql": return <Icon w={24} h={24}><path d="M1 1H23V23H1Z" fill="#234f6c" /><path d="M3 4Q10 3 13 9Q15 15 21 18L17 18L19 21Q14 18 12 17L9 18Q9 14 6 17Q7 10 3 4" stroke="#c8dce6" /><path d="M17 2L19 5L22 3L21 7L17 5" fill="#dde9ee" /></Icon>;
    case "r": return <Icon w={24} h={24}><defs><radialGradient id="rball"><stop stopColor="#73b6ef" /><stop offset="1" stopColor="#1c5db5" /></radialGradient></defs><circle cx="12" cy="12" r="11" fill="url(#rball)" /><text x="6.500" y="17.500" fontFamily="Liberation Serif" fontSize="16" fontWeight="bold" fill="white">R</text></Icon>;
    case "code": return <Icon w={24} h={24}><path d="M18 1L24 4V20L18 23L9 15L4 19L1 17V7L4 5L9 9Z" fill="#0875be" /><path d="M4 9V15L8 12ZM18 7L11 12L18 17Z" fill="white" /></Icon>;
    default: return <Icon w={24} h={24}><path d="M5 1H21V21H1Z" fill="#6587bf" stroke="#dbe8fa" /><path d="M8 3H23L21 22H6Z" fill="#eef5ff" /><text x="8" y="12" fontSize="10" fontWeight="bold" fill="#245aa5">W</text><path d="M18 7.500H21M18 10.500H21M9 14.500H20M9 17.500H20" stroke="#356bae" strokeWidth="1.500" /></Icon>;
  }
}

function Taskbar() {
  const apps = ["files", "viber", "notes", "ps", "chrome", "vs", "mysql", "r", "code", "word"];
  const running = ["chrome", "vs", "code", "word"];
  return (
    <footer className="flex h-[40px] shrink-0 items-center bg-[#171515] text-white">
      <div className="flex h-full w-[48px] items-center justify-center bg-black"><Icon w={16} h={16}><path d="M0 2.500L6.500 1.500V7.500H0ZM7.500 1.300L16 0V7.500H7.500ZM0 8.500H6.500V14.500L0 13.500ZM7.500 8.500H16V16L7.500 14.700Z" fill="white" /></Icon></div>
      <div className="flex h-full w-[344px] items-center bg-[#333] pl-[9px] text-[14px] leading-none text-[#a0a0a0]">
        <Icon w={22} h={22}><circle cx="11" cy="11" r="9" stroke="#f2f2f2" strokeWidth="2.800" /></Icon>
        <span className="ml-[5px] pt-[1px] tracking-[0.050px]">Ask me anything</span>
        <Icon w={12} h={18} className="ml-auto mr-[15px]"><path d="M3.500 1.500H8.500V11.500H3.500ZM1.500 9V13.500H10.500V9M6 13.500V17M3 16.500H9" stroke="#bebebe" /></Icon>
      </div>
      <div className="flex h-full w-[55px] items-center justify-center pr-[7px]"><Icon w={20} h={14}><path d="M4.500 .500H15.500V13.500H4.500ZM3 2.500H.500V11.500H3M17 2.500H19.500V11.500H17" stroke="white" /></Icon></div>
      <div className="flex h-full">
        {apps.map((name) => <div key={name} className={`mr-[9px] flex h-full w-[40px] items-center justify-center border-b-2 ${running.includes(name) ? "border-[#76b9ed]" : "border-transparent"}`}><AppIcon name={name} /></div>)}
      </div>
      <div className="ml-auto flex h-full items-center">
        <Icon w={12} h={8}><path d="M1 7L6 2L11 7" stroke="white" strokeWidth="1.300" /></Icon>
        <Icon w={15} h={10} className="ml-[11px]"><path d="M.500 1.500H12.500V8.500H.500ZM13 3.500H14.500V6.500H13" stroke="white" /><path d="M2 3H7V7H2Z" fill="white" /></Icon>
        <Icon w={14} h={14} className="ml-[10px]"><g stroke="#c7c7c7"><path d="M1 13Q2 3 12 1M4 13Q5 6 12 4.500M7 13Q8 8 12 7.500M10 13Q10 11 12 10.500" /></g><path d="M11 11h2v2h-2z" fill="white" /></Icon>
        <Icon w={17} h={14} className="ml-[8px]"><path d="M.500 5H3L6.500 1.500V12.500L3 9H.500ZM8.500 5Q10 7 8.500 9" stroke="white" /><path d="M10.500 3.500Q13 7 10.500 10.500M13 1.500Q17 7 13 12.500" stroke="#999" /></Icon>
        <Icon w={17} h={15} className="ml-[7px]"><path d="M6 0H11L17 10H12Z" fill="#f7ca38" /><path d="M6 0L0 10L3 15L9 5Z" fill="#159c5a" /><path d="M5 10H17L14 15H3Z" fill="#3678dc" /></Icon>
        <span className="ml-[9px] w-[25px] text-[11.800px] leading-none">ENG</span>
        <div className="ml-[6px] w-[62px] text-center text-[11.600px] leading-[18px] tracking-[-0.250px]"><div>1:12 PM</div><div>11/29/2016</div></div>
        <Icon w={25} h={25} className="ml-[12px] mt-[3px]"><path d="M1 2H17V14H7L3 17V14H1Z" fill="white" /><path d="M3 5.500H15M3 8.500H15M3 11.500H10" stroke="#222" /><circle cx="16.500" cy="16.500" r="7.500" fill="#3b3b3b" stroke="#757575" /><text x="13" y="21" fontSize="12" fill="white">3</text></Icon>
        <i className="ml-[12px] h-full w-px bg-[#555]" />
        <i className="w-[4px]" />
      </div>
    </footer>
  );
}

export default function App() {
  return (
    <div className="relative flex h-[768px] w-[1366px] flex-col overflow-hidden bg-[#9fbde6] font-['Open_Sans','Noto_Sans',sans-serif]">
      <TitleBar />
      <Tabs />
      <OfficeButton />
      <Ribbon />
      <div className="flex min-h-0 flex-1">
        <div className="flex flex-1 flex-col">
          <HorizontalRuler />
          <div className="flex min-h-0 flex-1"><VerticalRuler /><DocumentCanvas /></div>
        </div>
        <ScrollBar />
      </div>
      <StatusBar />
      <Taskbar />
    </div>
  );
}
